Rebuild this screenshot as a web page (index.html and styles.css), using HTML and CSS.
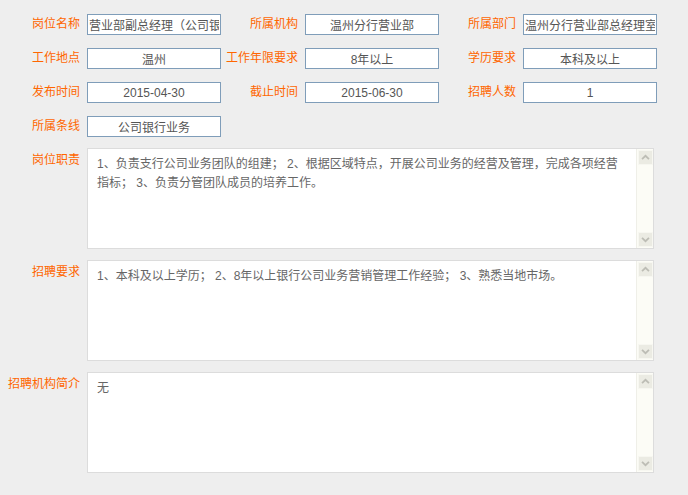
FILE: index.html
```html
<!DOCTYPE html>
<html lang="zh-CN">
<head>
  <meta charset="UTF-8" />
  <title>岗位详情</title>
  <link rel="stylesheet" href="styles.css">
</head>
<body>
  <div class="form">
    <div class="row">
      <div class="field"><label>岗位名称</label><input type="text" readonly value="营业部副总经理（公司银行业务）"></div>
      <div class="field"><label>所属机构</label><input type="text" readonly value="温州分行营业部"></div>
      <div class="field"><label>所属部门</label><input type="text" readonly value="温州分行营业部总经理室"></div>
    </div>
    <div class="row">
      <div class="field"><label>工作地点</label><input type="text" readonly value="温州"></div>
      <div class="field"><label>工作年限要求</label><input type="text" readonly value="8年以上"></div>
      <div class="field"><label>学历要求</label><input type="text" readonly value="本科及以上"></div>
    </div>
    <div class="row">
      <div class="field"><label>发布时间</label><input type="text" readonly value="2015-04-30"></div>
      <div class="field"><label>截止时间</label><input type="text" readonly value="2015-06-30"></div>
      <div class="field"><label>招聘人数</label><input type="text" readonly value="1"></div>
    </div>
    <div class="row last">
      <div class="field"><label>所属条线</label><input type="text" readonly value="公司银行业务"></div>
    </div>

    <div class="area-row">
      <label>岗位职责</label>
      <div class="area">
        <div class="area-text">1、负责支行公司业务团队的组建； 2、根据区域特点，开展公司业务的经营及管理，完成各项经营指标； 3、负责分管团队成员的培养工作。</div>
        <div class="scrollbar">
          <div class="sb-btn"><svg viewBox="0 0 15 15"><path d="M3.5 9.5l4-4 4 4" /></svg></div>
          <div class="sb-btn"><svg viewBox="0 0 15 15"><path d="M3.5 5.5l4 4 4-4" /></svg></div>
        </div>
      </div>
    </div>

    <div class="area-row">
      <label>招聘要求</label>
      <div class="area">
        <div class="area-text">1、本科及以上学历； 2、8年以上银行公司业务营销管理工作经验； 3、熟悉当地市场。</div>
        <div class="scrollbar">
          <div class="sb-btn"><svg viewBox="0 0 15 15"><path d="M3.5 9.5l4-4 4 4" /></svg></div>
          <div class="sb-btn"><svg viewBox="0 0 15 15"><path d="M3.5 5.5l4 4 4-4" /></svg></div>
        </div>
      </div>
    </div>

    <div class="area-row">
      <label>招聘机构简介</label>
      <div class="area">
        <div class="area-text">无</div>
        <div class="scrollbar">
          <div class="sb-btn"><svg viewBox="0 0 15 15"><path d="M3.5 9.5l4-4 4 4" /></svg></div>
          <div class="sb-btn"><svg viewBox="0 0 15 15"><path d="M3.5 5.5l4 4 4-4" /></svg></div>
        </div>
      </div>
    </div>
  </div>
</body>
</html>
```

FILE: styles.css
```css
html, body {
  margin: 0;
  padding: 0;
  background-color: #eeeeee;
  font-family: "Liberation Sans", "Noto Sans CJK SC", sans-serif;
  font-size: 12px;
}

.form {
  padding: 14px 0 0 3px;
}

.row {
  display: flex;
  height: 21px;
  margin-bottom: 13px;
}

.row.last {
  margin-bottom: 11px;
}

.field {
  display: flex;
  width: 218px;
}

label {
  width: 77px;
  margin-right: 7px;
  text-align: right;
  color: #ff6600;
  line-height: 21px;
  white-space: nowrap;
  flex-shrink: 0;
}

.field input {
  box-sizing: border-box;
  width: 134px;
  height: 21px;
  margin: 0;
  padding: 0 1px;
  border: 1px solid #7f9db9;
  background: #fff;
  color: #555;
  font-family: inherit;
  font-size: 12px;
  text-align: center;
  outline: none;
}

.area-row {
  display: flex;
  margin-bottom: 11px;
}

.area-row label {
  padding-top: 2px;
}

.area {
  box-sizing: border-box;
  display: flex;
  width: 567px;
  height: 101px;
  border: 1px solid #dcdcdc;
  background: #fff;
}

.area-text {
  flex: 1;
  padding: 6px 9px;
  color: #666;
  line-height: 19px;
}

/* 旧式滚动条 */
.scrollbar {
  width: 16px;
  display: flex;
  flex-direction: column;
  justify-content: space-between;
  background: #fcfcf6;
  border-left: 1px solid #efefe8;
}

.sb-btn {
  box-sizing: border-box;
  width: 15px;
  height: 15px;
  margin: 1px 0 1px 1px;
  background: #ebebe3;
  border: 1px solid #f7f7f1;
  border-radius: 1px;
}

.sb-btn svg {
  display: block;
  width: 13px;
  height: 13px;
  fill: none;
  stroke: #bdbdb5;
  stroke-width: 2;
}
```
